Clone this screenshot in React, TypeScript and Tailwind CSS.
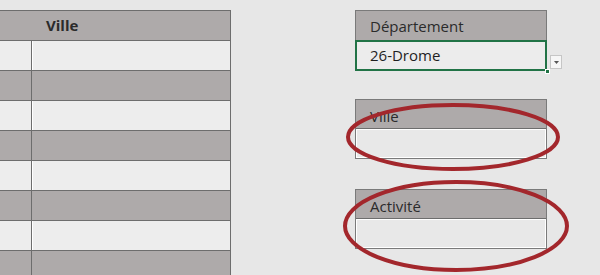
const rows = ["light", "dark", "light", "dark", "light", "dark", "light", "dark"];

function FieldBox({ label }: { label: string }) {
  return (
    <div className="w-[192px] border border-[#7a7a7a]">
      <div className="h-[29px] bg-[#aeaaaa] border-b border-[#6d6d6d] pl-[14px] pt-[4px] flex items-center text-[15px] text-[#2b2b2b]">
        {label}
      </div>
      <div className="h-[29px] bg-[#e8e8e8] border border-white"></div>
    </div>
  );
}

export default function App() {
  return (
    <div
      className="relative w-[600px] h-[275px] overflow-hidden bg-[#e7e7e7] flex"
      style={{ fontFamily: '"Open Sans", "Noto Sans", sans-serif' }}
    >
      {/* left table */}
      <div className="mt-[10px] w-[231px] border-t border-r border-[#6d6d6d] flex flex-col">
        <div className="h-[30px] shrink-0 bg-[#aeaaaa] border-b border-[#6d6d6d] pl-[46px] flex items-center text-[15px] font-bold text-[#2b2b2b]">
          Ville
        </div>
        {rows.map((r, i) => (
          <div
            key={i}
            className={
              r === "light"
                ? "h-[30px] shrink-0 flex bg-[#ededed] border-b border-[#6d6d6d]"
                : "h-[30px] shrink-0 flex bg-[#aeaaaa] border-b border-[#6d6d6d]"
            }
          >
            <div className="w-[32px] border-r border-[#6d6d6d]"></div>
            <div className={r === "light" ? "flex-1 border-l border-white" : "flex-1"}></div>
          </div>
        ))}
      </div>

      {/* right panel */}
      <div className="ml-[124px] mt-[10px] flex flex-col">
        <div className="relative w-[192px]">
          <div className="h-[30px] bg-[#aeaaaa] border-t border-l border-r border-[#7a7a7a] pl-[14px] pt-[2px] flex items-center text-[15px] text-[#2b2b2b]">
            Département
          </div>
          <div className="h-[31px] bg-[#ececec] border-2 border-[#217346] pl-[13px] flex items-center text-[15px] text-[#1f1f1f]">
            26-Drome
          </div>
          <div className="absolute left-[190px] top-[59px] w-[5px] h-[5px] bg-[#217346] border border-white"></div>
          <div className="absolute left-[195px] top-[45px] w-[12px] h-[14px] bg-[#f6f6f6] border border-[#c6c6c6] flex items-center justify-center">
            <svg width="5" height="3" viewBox="0 0 5 3">
              <path d="M0 0 H5 L2.5 3 Z" fill="#555" />
            </svg>
          </div>
        </div>
        <div className="mt-[28px]">
          <FieldBox label="Ville" />
        </div>
        <div className="mt-[30px]">
          <FieldBox label="Activité" />
        </div>
      </div>

      {/* red annotation circles */}
      <svg className="absolute left-0 top-0 pointer-events-none" width="600" height="275">
        <ellipse cx="453" cy="137" rx="105" ry="32" fill="none" stroke="#a3272c" strokeWidth="4" />
        <ellipse cx="456" cy="226" rx="111" ry="44" fill="none" stroke="#a3272c" strokeWidth="4" />
      </svg>
    </div>
  );
}
